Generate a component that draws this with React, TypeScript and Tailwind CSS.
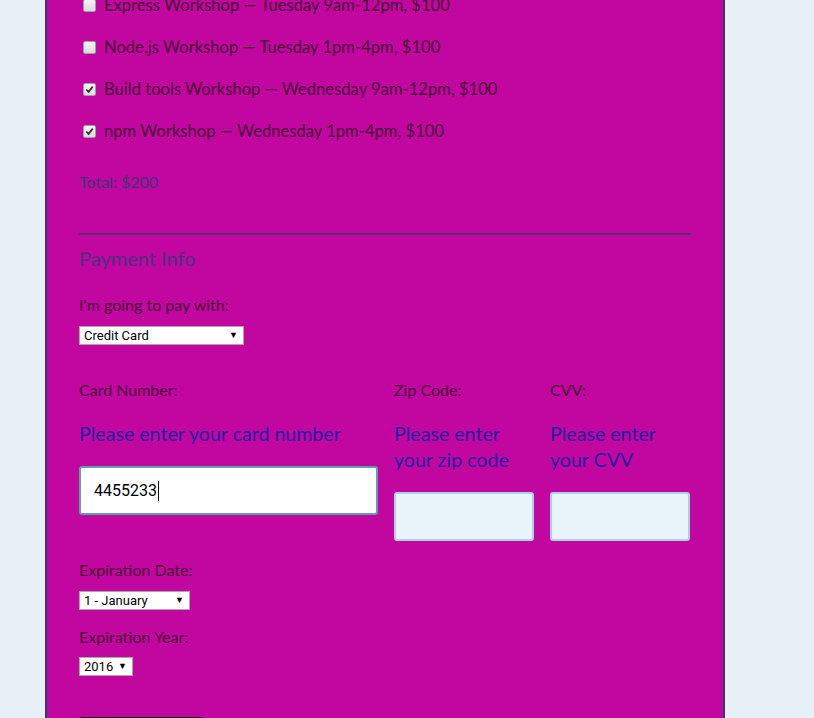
import React from "react"

const workshops = [
  { label: "Express Workshop — Tuesday 9am-12pm, $100", checked: false },
  { label: "Node.js Workshop — Tuesday 1pm-4pm, $100", checked: false },
  { label: "Build tools Workshop — Wednesday 9am-12pm, $100", checked: true },
  { label: "npm Workshop — Wednesday 1pm-4pm, $100", checked: true },
]

const font = { fontFamily: "Lato, 'Open Sans', sans-serif" }

const Checkbox: React.FC<{ checked: boolean }> = ({ checked }) => (
  <span className="ml-[4px] flex h-[13px] w-[13px] shrink-0 items-center justify-center rounded-[2px] border border-[#a0a0a0] bg-gradient-to-b from-[#f4f4f4] to-[#dcdcdc]">
    {checked && (
      <svg viewBox="0 0 10 10" className="h-[9px] w-[9px]">
        <path d="M1.5 5.2 L4 7.6 L8.6 1.8" fill="none" stroke="#333" strokeWidth="2" />
      </svg>
    )}
  </span>
)

const Select: React.FC<{ value: string; width: string }> = ({ value, width }) => (
  <div
    className={`flex h-[19px] items-center justify-between border border-[#a9a9a9] bg-white pl-[4px] pr-[5px] pt-[1px] text-[13px] text-black ${width}`}
    style={{ fontFamily: "Roboto, Arial, sans-serif" }}
  >
    <span>{value}</span>
    <span className="text-[9px]">▼</span>
  </div>
)

const Label: React.FC<{ children: React.ReactNode; className?: string }> = ({ children, className = "" }) => (
  <div className={`h-[20px] text-[16px] leading-[20px] text-[#4a0036] ${className}`}>{children}</div>
)

export default function App() {
  return (
    <div className="min-h-[718px] overflow-hidden bg-[#e7f0f6]" style={font}>
      <div className="ml-[45px] w-[680px] border-x-2 border-[#3a3a6a] bg-[#c107a0] px-[32px] pb-[40px]">
        <div className="-mt-[16px]">
          {workshops.map((w) => (
            <label key={w.label} className="flex h-[42px] items-center gap-[8px] text-[16.6px] text-[#4a0036]">
              <Checkbox checked={w.checked} />
              <span>{w.label}</span>
            </label>
          ))}
        </div>
        <div className="mt-[20px] h-[20px] text-[16px] leading-[20px] text-[#3b3478]">Total: $200</div>
        <div className="mt-[41px] h-[2px] w-[612px] bg-[#5a2a7c]" />
        <div className="mt-[9px] h-[28px] text-[20px] leading-[28px] text-[#4a2f80]">Payment Info</div>
        <Label className="mt-[23px]">I'm going to pay with:</Label>
        <div className="mt-[11px]">
          <Select value="Credit Card" width="w-[165px]" />
        </div>
        <div className="mt-[35px] flex w-[612px] items-start gap-[16px]">
          <div className="w-[299px]">
            <Label>Card Number:</Label>
            <div className="mt-[21px] text-[19.6px] leading-[26px] text-[#2419a0]">Please enter your card number</div>
            <div
              className="mt-[19px] flex h-[49px] items-center rounded-[3px] border-2 border-[#5e9fb2] bg-white pl-[13px] text-[16px] text-black"
              style={{ fontFamily: "Roboto, Arial, sans-serif" }}
            >
              4455233<span className="ml-[1px] h-[20px] w-px bg-black" />
            </div>
          </div>
          <div className="w-[140px]">
            <Label>Zip Code:</Label>
            <div className="mt-[21px] text-[19.6px] leading-[26px] text-[#2419a0]">Please enter your zip code</div>
            <div className="mt-[19px] h-[49px] rounded-[3px] border-2 border-[#a9d2e2] bg-[#e8f4fa]" />
          </div>
          <div className="w-[140px]">
            <Label>CVV:</Label>
            <div className="mt-[21px] text-[19.6px] leading-[26px] text-[#2419a0]">Please enter your CVV</div>
            <div className="mt-[19px] h-[49px] rounded-[3px] border-2 border-[#a9d2e2] bg-[#e8f4fa]" />
          </div>
        </div>
        <Label className="mt-[19px]">Expiration Date:</Label>
        <div className="mt-[11px]">
          <Select value="1 - January" width="w-[111px]" />
        </div>
        <Label className="mt-[17px]">Expiration Year:</Label>
        <div className="mt-[10px]">
          <Select value="2016" width="w-[54px]" />
        </div>
        <button className="mt-[41px] h-[44px] w-[125px] rounded-[3px] border-2 border-[#111] bg-[#222] pt-[8px] text-white">
          Register
        </button>
      </div>
    </div>
  )
}
